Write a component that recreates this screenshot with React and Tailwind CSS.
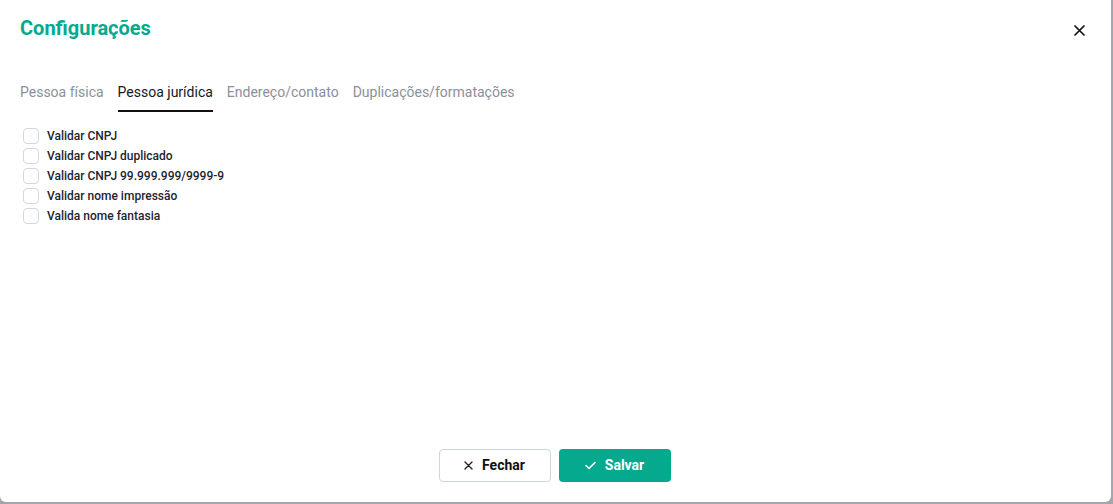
import React from "react";

const items = [
  "Validar CNPJ",
  "Validar CNPJ duplicado",
  "Validar CNPJ 99.999.999/9999-9",
  "Validar nome impressão",
  "Valida nome fantasia",
];

const tabs = ["Pessoa física", "Pessoa jurídica", "Endereço/contato", "Duplicações/formatações"];

export default function App() {
  return (
    <div className="w-[1113px] h-[504px] bg-[#a3a6ad] overflow-hidden" style={{ fontFamily: "Roboto, 'Liberation Sans', sans-serif" }}>
      <div className="w-[1111px] h-[502px] bg-white rounded-b-[6px] flex flex-col">
        <div className="flex items-center justify-between pl-[20px] pr-[26px] pt-[12px] h-[43px]">
          <h1 className="text-[20px] font-bold text-[#04a98e] leading-[26px]">Configurações</h1>
          <svg width="11" height="11" viewBox="0 0 11 11" className="mt-[5px]">
            <path d="M1 1 L10 10 M10 1 L1 10" stroke="#111" strokeWidth="1.7" strokeLinecap="round" />
          </svg>
        </div>
        <div className="flex gap-[14px] pl-[20px] mt-[39px]">
          {tabs.map((t, i) => (
            <div
              key={t}
              className={
                "text-[14px] leading-[20px] pt-0 pb-[8px] border-b-2 " +
                (i === 1 ? "text-[#111827] border-[#111]" : "text-[#8b9099] border-transparent")
              }
            >
              {t}
            </div>
          ))}
        </div>
        <div className="flex flex-col pl-[23px] mt-[14px]">
          {items.map((t) => (
            <label key={t} className="flex items-center h-[20px] gap-[8px]">
              <span className="w-[16px] h-[16px] rounded-[4px] border border-[#d4d7dc] bg-white" />
              <span className="text-[12px] font-medium text-[#1f2430]">{t}</span>
            </label>
          ))}
        </div>
        <div className="flex-1" />
        <div className="flex justify-center gap-[8px] pb-[20px] pr-[2px]">
          <button className="w-[112px] h-[33px] rounded-[4px] border border-[#cdd5e0] bg-white flex items-center justify-center gap-[9px] text-[14px] font-bold text-[#111]">
            <svg width="9" height="9" viewBox="0 0 9 9">
              <path d="M1 1 L8 8 M8 1 L1 8" stroke="#222" strokeWidth="1.4" strokeLinecap="round" />
            </svg>
            Fechar
          </button>
          <button className="w-[112px] h-[33px] rounded-[4px] bg-[#04a98e] flex items-center justify-center gap-[9px] text-[14px] font-bold text-white">
            <svg width="11" height="9" viewBox="0 0 11 9">
              <path d="M1 4.5 L4 7.5 L10 1.5" stroke="#fff" strokeWidth="1.6" fill="none" strokeLinecap="round" strokeLinejoin="round" />
            </svg>
            Salvar
          </button>
        </div>
      </div>
    </div>
  );
}
